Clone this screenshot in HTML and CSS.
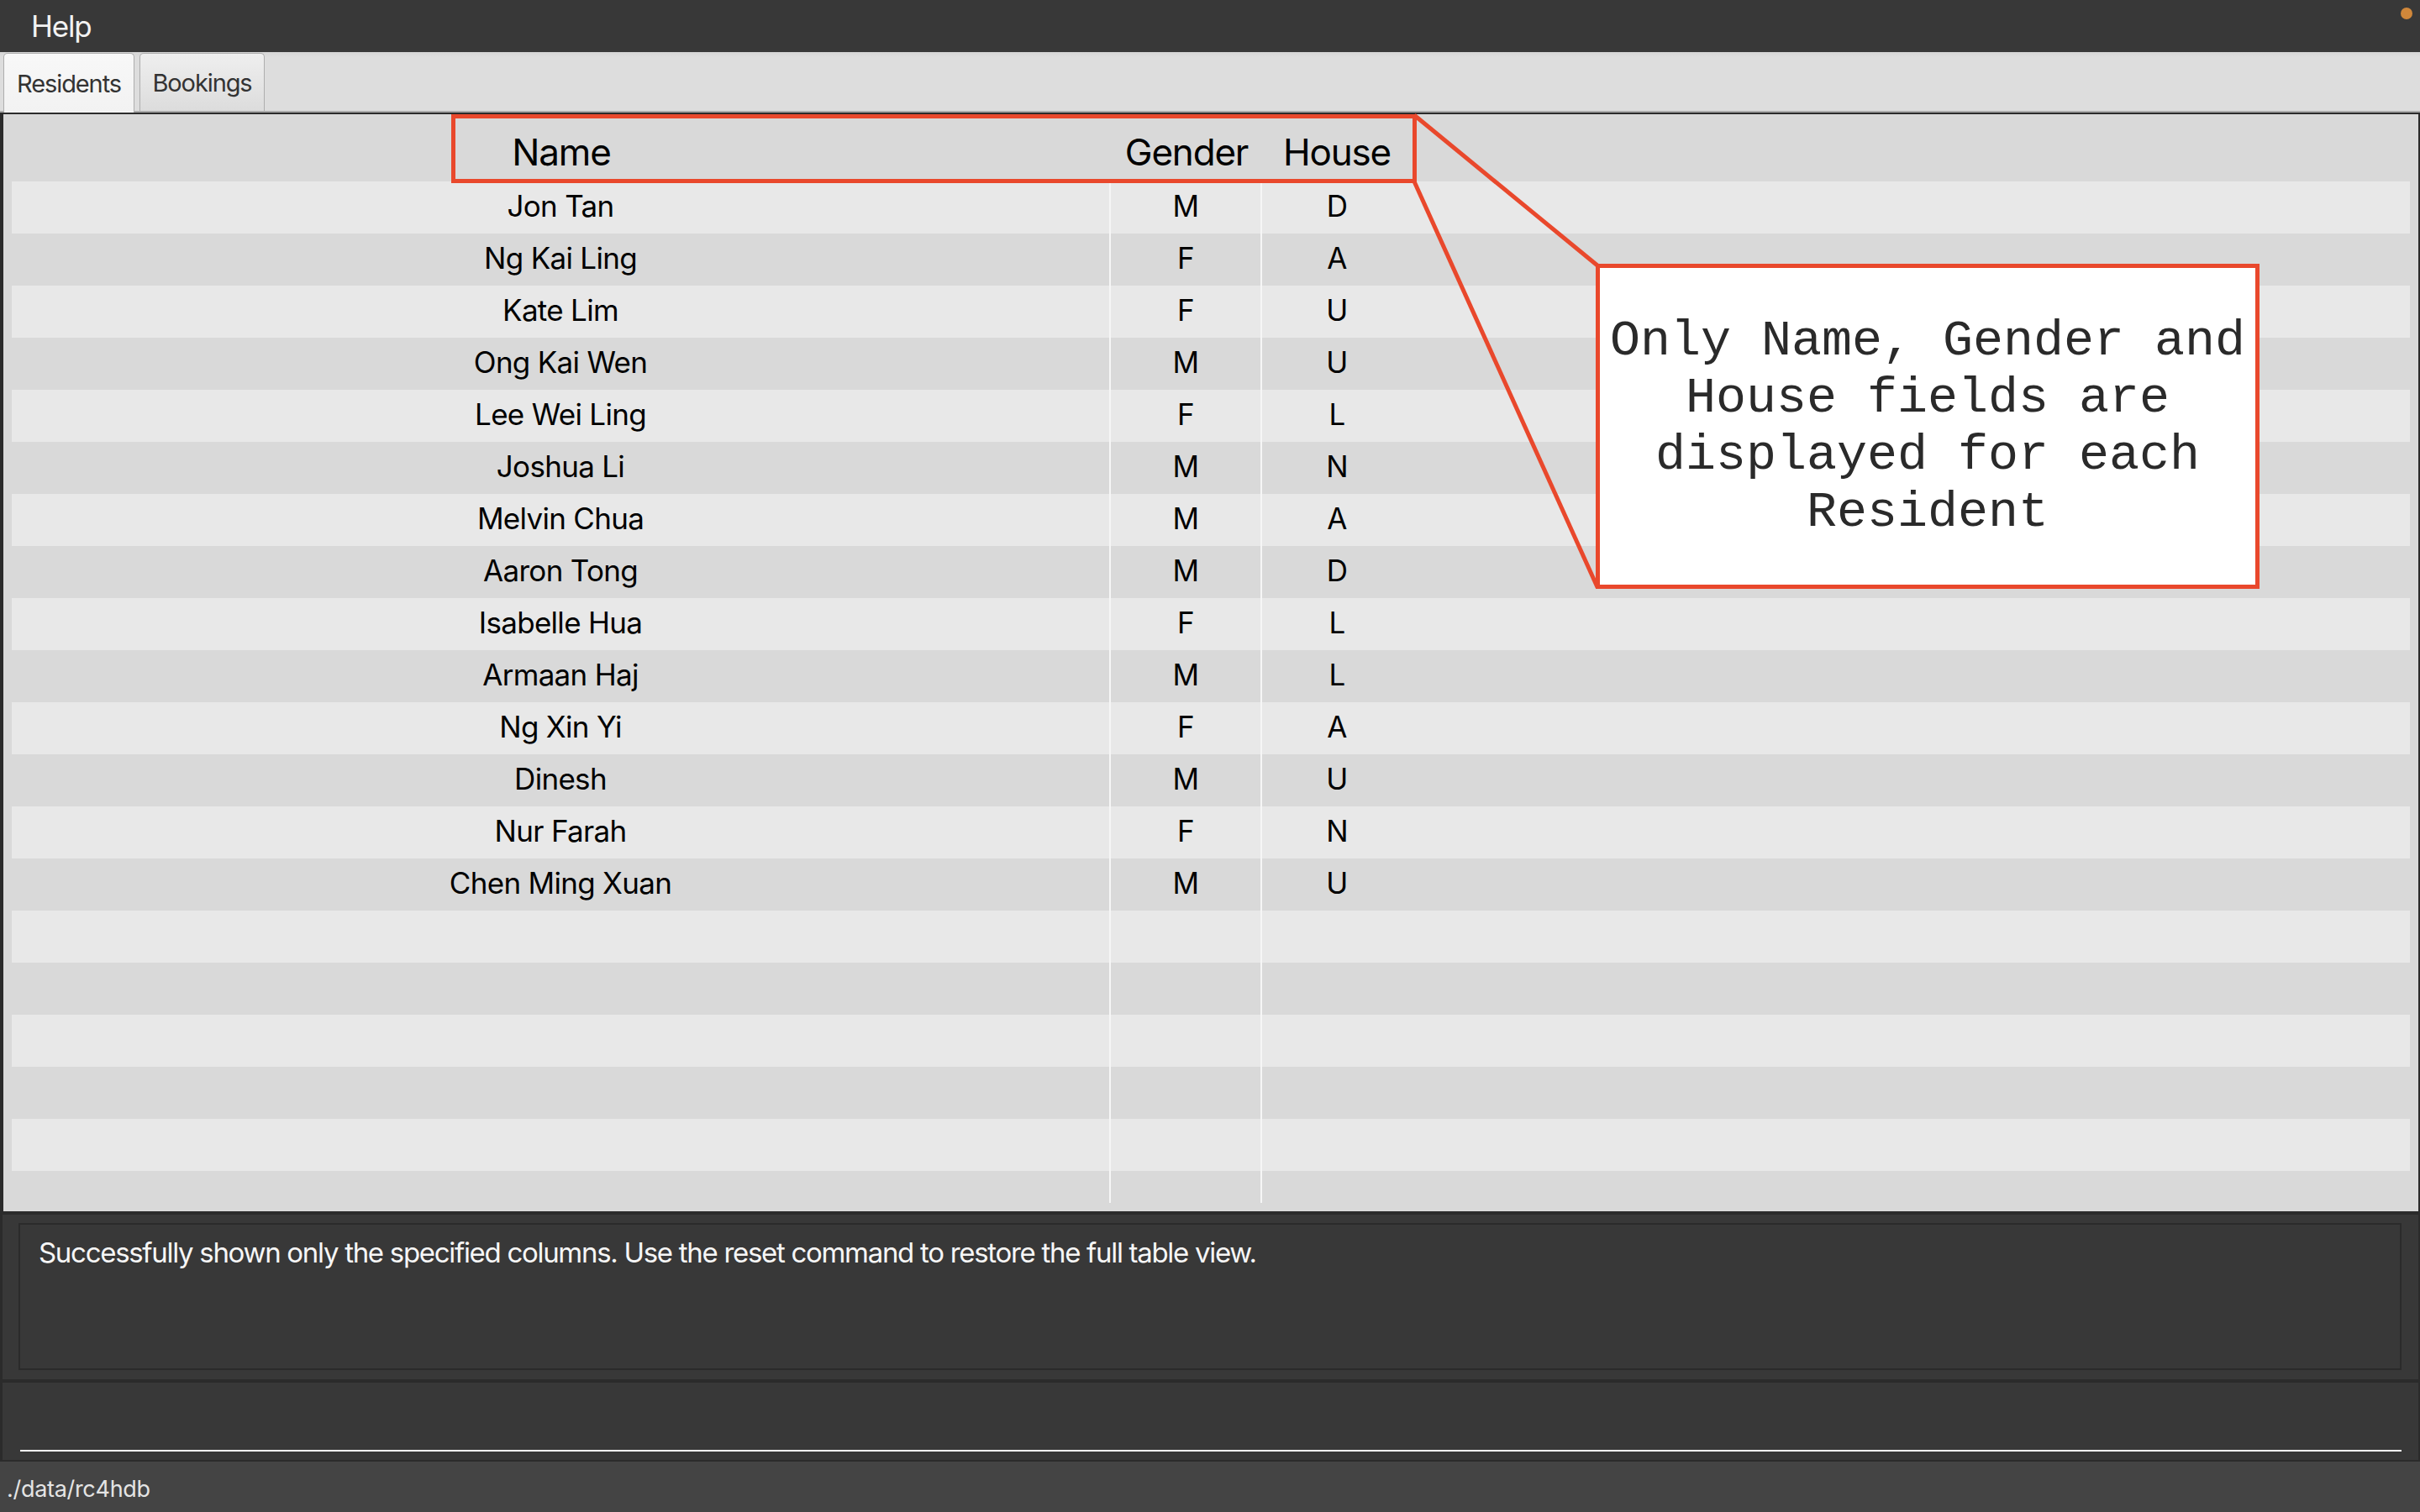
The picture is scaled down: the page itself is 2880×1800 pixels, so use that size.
FILE: index.html
```html
<!DOCTYPE html>
<html lang="en">
<head>
<meta charset="utf-8">
<title>RC4HDB</title>
<link rel="stylesheet" href="styles.css">
</head>
<body>
<div class="app">
  <header class="menubar">
    <span class="menu-item">Help</span>
    <span class="status-dot"></span>
  </header>

  <nav class="tabbar">
    <div class="tab tab-active">Residents</div>
    <div class="tab">Bookings</div>
  </nav>

  <section class="content">
    <div class="grid-row head-row">
      <div class="cell">Name</div>
      <div class="cell">Gender</div>
      <div class="cell">House</div>
      <div class="cell"></div>
    </div>
    <div class="rows">
      <div class="grid-row data-row"><div class="cell line">Jon Tan</div><div class="cell line">M</div><div class="cell">D</div><div class="cell"></div></div>
      <div class="grid-row data-row"><div class="cell line">Ng Kai Ling</div><div class="cell line">F</div><div class="cell">A</div><div class="cell"></div></div>
      <div class="grid-row data-row"><div class="cell line">Kate Lim</div><div class="cell line">F</div><div class="cell">U</div><div class="cell"></div></div>
      <div class="grid-row data-row"><div class="cell line">Ong Kai Wen</div><div class="cell line">M</div><div class="cell">U</div><div class="cell"></div></div>
      <div class="grid-row data-row"><div class="cell line">Lee Wei Ling</div><div class="cell line">F</div><div class="cell">L</div><div class="cell"></div></div>
      <div class="grid-row data-row"><div class="cell line">Joshua Li</div><div class="cell line">M</div><div class="cell">N</div><div class="cell"></div></div>
      <div class="grid-row data-row"><div class="cell line">Melvin Chua</div><div class="cell line">M</div><div class="cell">A</div><div class="cell"></div></div>
      <div class="grid-row data-row"><div class="cell line">Aaron Tong</div><div class="cell line">M</div><div class="cell">D</div><div class="cell"></div></div>
      <div class="grid-row data-row"><div class="cell line">Isabelle Hua</div><div class="cell line">F</div><div class="cell">L</div><div class="cell"></div></div>
      <div class="grid-row data-row"><div class="cell line">Armaan Haj</div><div class="cell line">M</div><div class="cell">L</div><div class="cell"></div></div>
      <div class="grid-row data-row"><div class="cell line">Ng Xin Yi</div><div class="cell line">F</div><div class="cell">A</div><div class="cell"></div></div>
      <div class="grid-row data-row"><div class="cell line">Dinesh</div><div class="cell line">M</div><div class="cell">U</div><div class="cell"></div></div>
      <div class="grid-row data-row"><div class="cell line">Nur Farah</div><div class="cell line">F</div><div class="cell">N</div><div class="cell"></div></div>
      <div class="grid-row data-row"><div class="cell line">Chen Ming Xuan</div><div class="cell line">M</div><div class="cell">U</div><div class="cell"></div></div>
      <div class="grid-row data-row"><div class="cell line"></div><div class="cell line"></div><div class="cell"></div><div class="cell"></div></div>
      <div class="grid-row data-row"><div class="cell line"></div><div class="cell line"></div><div class="cell"></div><div class="cell"></div></div>
      <div class="grid-row data-row"><div class="cell line"></div><div class="cell line"></div><div class="cell"></div><div class="cell"></div></div>
      <div class="grid-row data-row"><div class="cell line"></div><div class="cell line"></div><div class="cell"></div><div class="cell"></div></div>
      <div class="grid-row data-row"><div class="cell line"></div><div class="cell line"></div><div class="cell"></div><div class="cell"></div></div>
      <div class="grid-row tail-row"><div class="cell line"></div><div class="cell line"></div><div class="cell"></div><div class="cell"></div></div>
    </div>
  </section>

  <section class="result-panel">
    <div class="result-box">Successfully shown only the specified columns. Use the reset command to restore the full table view.</div>
  </section>

  <section class="command-panel">
    <div class="command-input"></div>
  </section>

  <footer class="statusbar">./data/rc4hdb</footer>
</div>

<div class="highlight-box"></div>
<svg class="connectors" width="2880" height="1800" viewBox="0 0 2880 1800" aria-hidden="true">
  <line x1="1683" y1="137" x2="1901" y2="316" stroke="#e9482c" stroke-width="5"/>
  <line x1="1683" y1="216" x2="1901" y2="699" stroke="#e9482c" stroke-width="5"/>
</svg>
<div class="callout">Only Name, Gender and House fields are displayed for each Resident</div>
</body>
</html>
```

FILE: styles.css
```css
* {
  box-sizing: border-box;
}

html, body {
  margin: 0;
  padding: 0;
}

body {
  width: 2880px;
  height: 1800px;
  background: #2b2b2b;
  font-family: Inter, "Noto Sans", sans-serif;
  position: relative;
  overflow: hidden;
}

.app {
  display: flex;
  flex-direction: column;
  height: 1800px;
}

/* Menu bar */
.menubar {
  height: 62px;
  background: #383838;
  display: flex;
  align-items: center;
  padding-left: 37px;
}

.menu-item {
  color: #f2f2f2;
  font-size: 35px;
  letter-spacing: -1.2px;
  line-height: 40px;
}

.status-dot {
  position: absolute;
  top: 9px;
  left: 2857px;
  width: 14px;
  height: 14px;
  border-radius: 50%;
  background: #d0873a;
}

/* Tabs */
.tabbar {
  height: 72px;
  background: linear-gradient(to top, #a9a9a9 0, #a9a9a9 2px, #dddddd 2px, #dddddd 66px, #d5d5d5 72px);
  display: flex;
  align-items: flex-end;
  gap: 6px;
  padding-left: 4px;
}

.tab {
  height: 69px;
  margin-bottom: 2px;
  padding: 0 16px;
  display: flex;
  align-items: center;
  justify-content: center;
  font-size: 29px;
  letter-spacing: -1.1px;
  color: #333333;
  border: 1px solid #aeaeae;
  border-bottom: none;
  border-radius: 5px 5px 0 0;
  background: linear-gradient(#efefef, #dcdcdc);
}

.tab-active {
  width: 156px;
  height: 71px;
  margin-bottom: 0;
  background: linear-gradient(#f8f8f8, #f2f2f2);
}

.tab:not(.tab-active) {
  width: 149px;
}

/* Table area */
.content {
  height: 1308px;
  background: #d9d9d9;
  border-top: 2px solid #2b2b2b;
  border-left: 4px solid #2b2b2b;
  border-right: 2px solid #2b2b2b;
  padding: 0 10px 10px 10px;
}

.grid-row {
  display: grid;
  grid-template-columns: 1308px 180px 178px 1fr;
}

.cell {
  display: flex;
  align-items: center;
  justify-content: center;
  color: #000000;
  white-space: nowrap;
}

.head-row {
  height: 80px;
}

.head-row .cell {
  font-size: 44px;
  letter-spacing: -1.2px;
  padding-top: 10px;
}

.data-row {
  height: 62px;
}

.data-row .cell {
  font-size: 35px;
  letter-spacing: -0.7px;
  padding-bottom: 5px;
}

.data-row:nth-child(odd) {
  background: #e8e8e8;
}

.data-row:nth-child(even) {
  background: #d9d9d9;
}

.cell.line {
  border-right: 2px solid #f6f6f6;
}

.tail-row {
  height: 38px;
}

/* Result panel */
.result-panel {
  height: 196px;
  margin: 4px 2px 0 3px;
  background: #383838;
  padding: 10px 20px 11px 19px;
}

.result-box {
  height: 100%;
  border: 2px solid #2b2b2b;
  padding: 13px 22px 0 22px;
  color: #f6f6f6;
  font-size: 33px;
  line-height: 40px;
  letter-spacing: -1.3px;
}

/* Command box */
.command-panel {
  height: 92px;
  margin: 4px 2px 0 3px;
  background: #383838;
  padding: 0 20px 10px 21px;
  display: flex;
  align-items: flex-end;
}

.command-input {
  flex: 1;
  height: 40px;
  border-bottom: 2px solid #ffffff;
}

/* Status bar */
.statusbar {
  height: 60px;
  margin-top: 2px;
  background: #444444;
  color: #e4e4e4;
  font-size: 27px;
  letter-spacing: -0.3px;
  display: flex;
  align-items: center;
  padding: 4px 0 0 8px;
}

/* Annotation overlay */
.highlight-box {
  position: absolute;
  left: 537px;
  top: 136px;
  width: 1149px;
  height: 82px;
  border: 5px solid #e9482c;
}

.connectors {
  position: absolute;
  left: 0;
  top: 0;
  pointer-events: none;
}

.callout {
  position: absolute;
  left: 1899px;
  top: 314px;
  width: 790px;
  height: 387px;
  background: #ffffff;
  border: 5px solid #e9482c;
  display: flex;
  align-items: center;
  justify-content: center;
  text-align: center;
  font-family: "Liberation Mono", "Courier New", monospace;
  font-size: 60px;
  line-height: 68px;
  color: #2a2a2a;
  padding: 0 4px;
}
```
